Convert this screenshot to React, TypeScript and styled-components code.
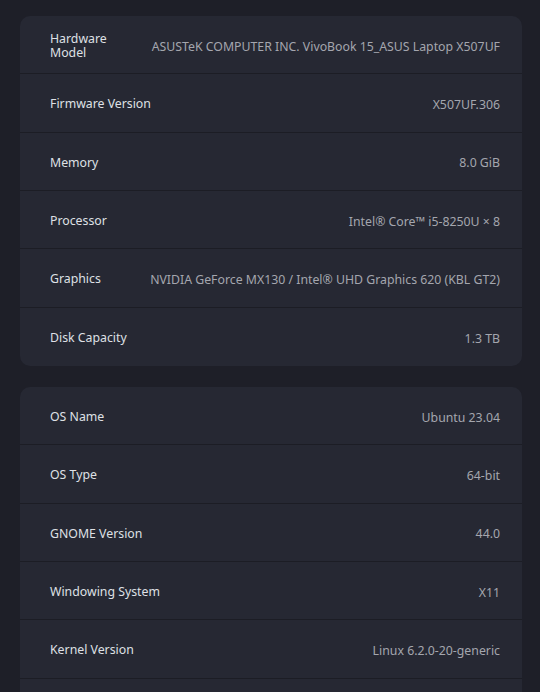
import React from "react";
import styled, { createGlobalStyle } from "styled-components";

const GlobalStyle = createGlobalStyle`
  html, body {
    margin: 0;
    padding: 0;
    background: #1e1f28;
  }
  body {
    font-family: "Noto Sans", "Open Sans", sans-serif;
    -webkit-font-smoothing: antialiased;
  }
`;

const Page = styled.div`
  width: 540px;
  height: 692px;
  overflow: hidden;
  display: flex;
  flex-direction: column;
  gap: 21px;
  padding: 16px 18px 0 20px;
  box-sizing: border-box;
`;

const Card = styled.div`
  background: #262833;
  border-radius: 10px;
  display: flex;
  flex-direction: column;
  flex-shrink: 0;
  overflow: hidden;
`;

const Row = styled.div`
  height: 58.33px;
  box-sizing: border-box;
  display: flex;
  align-items: center;
  justify-content: space-between;
  gap: 16px;
  padding: 3px 22px 0 30px;
  border-bottom: 1px solid #1c1d25;

  &:last-child {
    border-bottom: none;
  }
`;

const Label = styled.div<{ $wrap?: boolean }>`
  color: #dfe0e5;
  font-size: 12.3px;
  line-height: 14px;
  max-width: 80px;
  flex-shrink: 0;
  white-space: ${(p) => (p.$wrap ? "normal" : "nowrap")};
`;

const Value = styled.div`
  color: #a4a6ae;
  font-size: 12.3px;
  text-align: right;
  white-space: nowrap;
`;

type Info = { label: string; value: string; wrap?: boolean };

const hardware: Info[] = [
  { label: "Hardware Model", value: "ASUSTeK COMPUTER INC. VivoBook 15_ASUS Laptop X507UF", wrap: true },
  { label: "Firmware Version", value: "X507UF.306" },
  { label: "Memory", value: "8.0 GiB" },
  { label: "Processor", value: "Intel® Core™ i5-8250U × 8" },
  { label: "Graphics", value: "NVIDIA GeForce MX130 / Intel® UHD Graphics 620 (KBL GT2)" },
  { label: "Disk Capacity", value: "1.3 TB" },
];

const software: Info[] = [
  { label: "OS Name", value: "Ubuntu 23.04" },
  { label: "OS Type", value: "64-bit" },
  { label: "GNOME Version", value: "44.0" },
  { label: "Windowing System", value: "X11" },
  { label: "Kernel Version", value: "Linux 6.2.0-20-generic" },
  { label: "", value: "" },
];

function InfoCard({ items }: { items: Info[] }) {
  return (
    <Card>
      {items.map((it, i) => (
        <Row key={i}>
          <Label $wrap={it.wrap}>{it.label}</Label>
          <Value>{it.value}</Value>
        </Row>
      ))}
    </Card>
  );
}

export default function App() {
  return (
    <>
      <GlobalStyle />
      <Page>
        <InfoCard items={hardware} />
        <InfoCard items={software} />
      </Page>
    </>
  );
}
